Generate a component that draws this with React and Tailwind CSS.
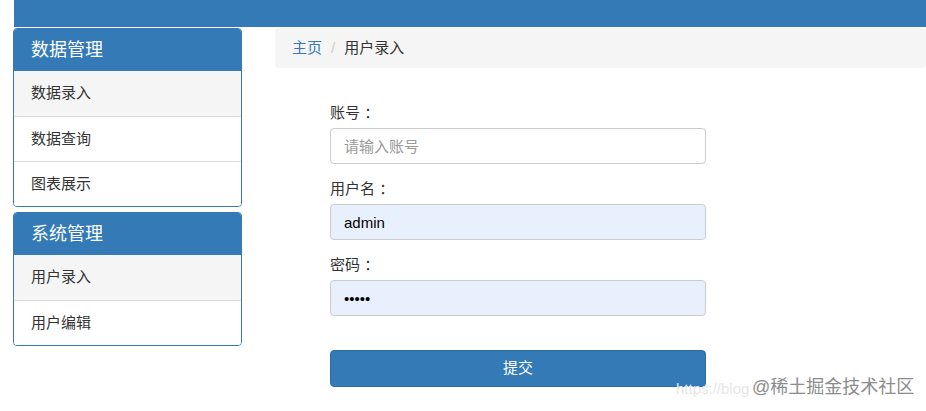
import React from 'react';

const font = { fontFamily: '"Liberation Sans", "Noto Sans CJK SC", sans-serif' };

const Panel = ({ title, items }) => (
  <div className="rounded-[4px] border border-[#337ab7] overflow-hidden bg-white">
    <div className="h-[42px] bg-[#337ab7] text-white text-[18px] flex items-center px-[17px]">{title}</div>
    {items.map((it, i) => (
      <div
        key={it}
        className={`h-[45px] flex items-center px-[17px] text-[15px] text-[#333] ${
          i === 0 ? 'bg-[#f5f5f5]' : 'bg-white'
        } ${i > 0 ? 'border-t border-[#ddd]' : ''}`}
      >
        {it}
      </div>
    ))}
  </div>
);

const Field = ({ label, children }) => (
  <div className="mb-[15px]">
    <div className="h-[20px] leading-[20px] text-[15px] text-[#333] mb-[5px]">{label}</div>
    {children}
  </div>
);

export default function App() {
  return (
    <div className="relative w-[926px] h-[411px] bg-white overflow-hidden" style={font}>
      <div className="ml-[14px] h-[27px] bg-[#337ab7]" />
      <div className="flex">
        <div className="ml-[13px] w-[229px] pt-[1px] flex flex-col gap-[5px]">
          <Panel title="数据管理" items={['数据录入', '数据查询', '图表展示']} />
          <Panel title="系统管理" items={['用户录入', '用户编辑']} />
        </div>
        <div className="ml-[33px] flex-1 pt-[1px]">
          <div className="h-[40px] bg-[#f5f5f5] rounded-[4px] flex items-center px-[17px] text-[15px]">
            <span className="text-[#337ab7]">主页</span>
            <span className="text-[#ccc] px-[9px]">/</span>
            <span className="text-[#333]">用户录入</span>
          </div>
          <div className="ml-[55px] w-[376px] mt-[35px]">
            <Field label="账号 ：">
              <input
                className="w-full h-[36px] rounded-[4px] border border-[#ccc] px-[13px] text-[15px] text-[#333] placeholder:text-[#999] outline-none"
                placeholder="请输入账号"
                style={font}
              />
            </Field>
            <Field label="用户名 ：">
              <input
                className="w-full h-[36px] rounded-[4px] border border-[#ccc] bg-[#e8f0fe] px-[13px] text-[15px] text-black outline-none"
                defaultValue="admin"
                style={font}
              />
            </Field>
            <Field label="密码 ：">
              <input
                type="password"
                className="w-full h-[36px] rounded-[4px] border border-[#ccc] bg-[#e8f0fe] px-[13px] text-[15px] text-black outline-none"
                defaultValue="admin"
                style={font}
              />
            </Field>
            <button
              className="mt-[19px] w-full h-[37px] rounded-[4px] bg-[#337ab7] border border-[#2e6da4] text-white text-[15px]"
              style={font}
            >
              提交
            </button>
          </div>
        </div>
      </div>
      <div className="absolute left-[676px] top-[378px] text-[15px] text-[#e6e6e6] whitespace-nowrap">https://blog</div>
      <div className="absolute left-[752px] top-[374px] text-[18px] text-[#8c8c8c] whitespace-nowrap [text-shadow:0_0_2px_#fff]">@稀土掘金技术社区</div>
    </div>
  );
}
